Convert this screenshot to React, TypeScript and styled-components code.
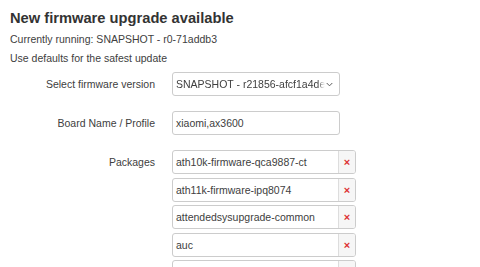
import React from "react";
import styled, { createGlobalStyle } from "styled-components";

const GlobalStyle = createGlobalStyle`
  body {
    margin: 0;
    background: #fff;
    font-family: "Liberation Sans", Arial, sans-serif;
    color: #404040;
  }
`;

const packages = [
  "ath10k-firmware-qca9887-ct",
  "ath11k-firmware-ipq8074",
  "attendedsysupgrade-common",
  "auc",
  "",
];

const App: React.FC = () => {
  return (
    <Page>
      <GlobalStyle />
      <Title>New firmware upgrade available</Title>
      <Note>Currently running: SNAPSHOT - r0-71addb3</Note>
      <Note>Use defaults for the safest update</Note>
      <Form>
        <Row>
          <Label>Select firmware version</Label>
          <SelectBox>
            <span>SNAPSHOT - r21856-afcf1a4de4</span>
            <Chevron viewBox="0 0 8 5">
              <path d="M0.8 0.8 L4 4 L7.2 0.8" />
            </Chevron>
          </SelectBox>
        </Row>
        <Row>
          <Label>Board Name / Profile</Label>
          <TextBox>xiaomi,ax3600</TextBox>
        </Row>
        <Row>
          <Label>Packages</Label>
          <List>
            {packages.map((p, i) => (
              <Item key={i}>
                <ItemText>{p}</ItemText>
                <Remove>×</Remove>
              </Item>
            ))}
          </List>
        </Row>
      </Form>
    </Page>
  );
};

const Page = styled.div`
  width: 480px;
  height: 267px;
  overflow: hidden;
  padding: 10px 10px 0 10px;
  box-sizing: border-box;
`;

const Title = styled.div`
  font-size: 14.7px;
  font-weight: bold;
  color: #333;
  line-height: 16px;
  margin-bottom: 7px;
`;

const Note = styled.div`
  font-size: 10.5px;
  line-height: 13px;
  color: #404040;
  margin-bottom: 6px;
`;

const Form = styled.div`
  display: flex;
  flex-direction: column;
  gap: 15px;
  margin-top: 7px;
`;

const Row = styled.div`
  display: flex;
  align-items: flex-start;
  gap: 17px;
`;

const Label = styled.div`
  width: 145px;
  text-align: right;
  font-size: 10.5px;
  line-height: 24px;
  color: #404040;
`;

const Field = styled.div`
  height: 24px;
  box-sizing: border-box;
  border: 1px solid #ccc;
  border-radius: 3px;
  font-size: 10.5px;
  color: #404040;
  display: flex;
  align-items: center;
  padding: 0 3px;
  white-space: nowrap;
  overflow: hidden;
`;

const SelectBox = styled(Field)`
  width: 168px;
  justify-content: space-between;
  padding-right: 6px;
  span {
    overflow: hidden;
    width: 149px;
    -webkit-mask-image: linear-gradient(90deg, #000 95%, transparent 100%);
  }
`;

const Chevron = styled.svg`
  width: 7px;
  height: 5px;
  fill: none;
  stroke: #555;
  stroke-width: 1.1;
`;

const TextBox = styled(Field)`
  width: 168px;
`;

const List = styled.div`
  display: flex;
  flex-direction: column;
  gap: 3.5px;
`;

const Item = styled.div`
  width: 184px;
  height: 24px;
  box-sizing: border-box;
  border: 1px solid #ccc;
  border-radius: 3px;
  display: flex;
  overflow: hidden;
`;

const ItemText = styled.div`
  flex: 1;
  font-size: 10.5px;
  color: #404040;
  padding: 0 3px;
  display: flex;
  align-items: center;
  white-space: nowrap;
`;

const Remove = styled.div`
  width: 16px;
  border-left: 1px solid #ddd;
  background: #f6f6f6;
  color: #d33;
  font-size: 11px;
  font-weight: bold;
  display: flex;
  align-items: center;
  justify-content: center;
`;

export default App;
